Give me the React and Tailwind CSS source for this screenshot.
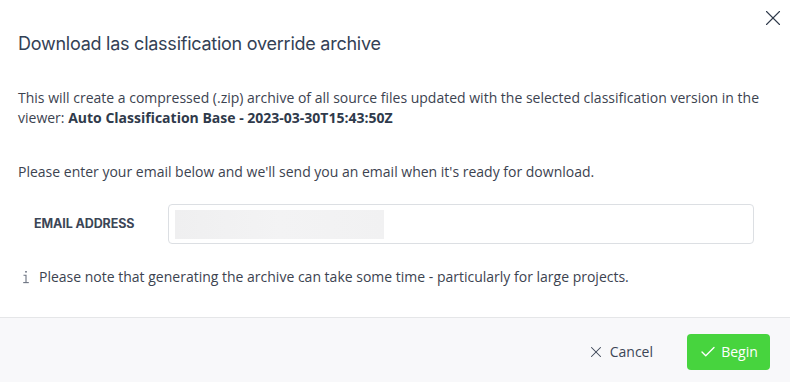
import { X, Check } from 'lucide-react';

function InfoGlyph() {
  return (
    <svg width="8" height="14" viewBox="0 0 8 14" className="shrink-0" fill="none">
      <rect x="3.2" y="1" width="1.6" height="1.6" fill="#6b7280" />
      <path d="M1.5 5.2 H4 V12.6" stroke="#6b7280" strokeWidth="1.1" />
      <path d="M1.2 12.6 H6.8" stroke="#6b7280" strokeWidth="1.1" />
    </svg>
  );
}

export default function App() {
  return (
    <div className="relative w-[790px] h-[382px] bg-white flex flex-col font-['Open_Sans',sans-serif] text-[#3c4350]">
      {/* close */}
      <button className="absolute top-[5px] right-[4px] text-[#2f3a4b]">
        <X className="h-[26px] w-[26px]" strokeWidth={1} />
      </button>

      <div className="flex-1 px-[18px] pt-[30px]">
        <h2 className="font-['Inter',sans-serif] text-[18px] leading-[28px] text-[#334155] tracking-[-0.25px]">
          Download las classification override archive
        </h2>

        <p className="mt-[30px] text-[14px] leading-[20px]">
          This will create a compressed (.zip) archive of all source files updated with the selected classification version in the viewer:{' '}
          <span className="font-bold text-[#2f3a4b]">Auto Classification Base - 2023-03-30T15:43:50Z</span>
        </p>

        <p className="mt-[34px] text-[14px] leading-[20px]">
          Please enter your email below and we'll send you an email when it's ready for download.
        </p>

        <div className="mt-[22px] flex items-center">
          <label className="w-[150px] pl-[16px] font-['Inter',sans-serif] font-bold text-[12.5px] tracking-[-0.1px] text-[#3c4656]">
            EMAIL ADDRESS
          </label>
          <div className="w-[586px] h-[40px] border border-[#dcdfe3] rounded-[4px] px-[6px] py-[5px] flex items-center">
            <div className="w-[209px] h-[29px] bg-gradient-to-r from-[#efeff0] via-[#f3f3f4] to-[#f1f1f2]" />
          </div>
        </div>

        <div className="mt-[23px] flex items-center gap-[9px] pl-[4px] text-[14px] leading-[20px]">
          <InfoGlyph />
          <span>Please note that generating the archive can take some time - particularly for large projects.</span>
        </div>
      </div>

      <div className="h-[65px] border-t border-[#e5e6e8] bg-[#f8f8fa] flex items-center justify-end gap-[22px] pr-[20px] pt-[3px]">
        <button className="flex items-center gap-[5px] px-[12px] h-[36px] text-[14px] text-[#3c4656]">
          <X className="h-[18px] w-[18px]" strokeWidth={1.4} />
          Cancel
        </button>
        <button className="flex items-center gap-[4px] w-[83px] justify-center h-[36px] rounded-[4px] bg-[#47d43e] text-white text-[14px]">
          <Check className="h-[18px] w-[18px]" strokeWidth={1.8} />
          Begin
        </button>
      </div>
    </div>
  );
}
